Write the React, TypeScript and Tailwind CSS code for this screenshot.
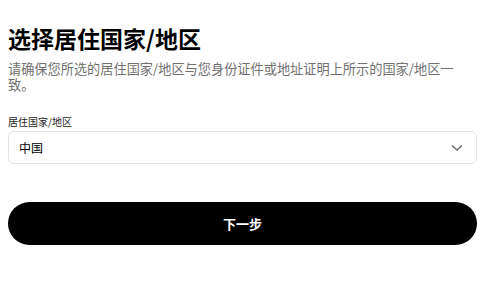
import React from "react";

export default function App() {
  return (
    <div
      className="w-[488px] h-[289px] bg-white pl-2 pr-[11px] pt-[24px] text-black"
      style={{ fontFamily: '"Noto Sans CJK SC", "Noto Sans", sans-serif' }}
    >
      <h1 className="text-[23px] leading-[28px] font-bold">选择居住国家/地区</h1>
      <p className="mt-[9px] pr-[8px] text-[13.2px] leading-[16px] text-[#707070]">
        请确保您所选的居住国家/地区与您身份证件或地址证明上所示的国家/地区一致。
      </p>
      <div className="mt-[22px] text-[10px] leading-[14px] text-[#222]">居住国家/地区</div>
      <div className="mt-[2px] h-[33px] w-full rounded-[6px] border border-[#e3e3e3] flex items-center justify-between pl-[10px] pr-[13px]">
        <span className="text-[12px] leading-[16px] text-black">中国</span>
        <svg width="12" height="8" viewBox="0 0 12 8" fill="none">
          <path d="M1.5 2 L6 6 L10.5 2" stroke="#666" strokeWidth="1.4" strokeLinecap="round" strokeLinejoin="round" />
        </svg>
      </div>
      <button className="mt-[38px] h-[43px] w-full rounded-full bg-black text-white text-[13px] font-bold flex items-center justify-center">
        下一步
      </button>
    </div>
  );
}
